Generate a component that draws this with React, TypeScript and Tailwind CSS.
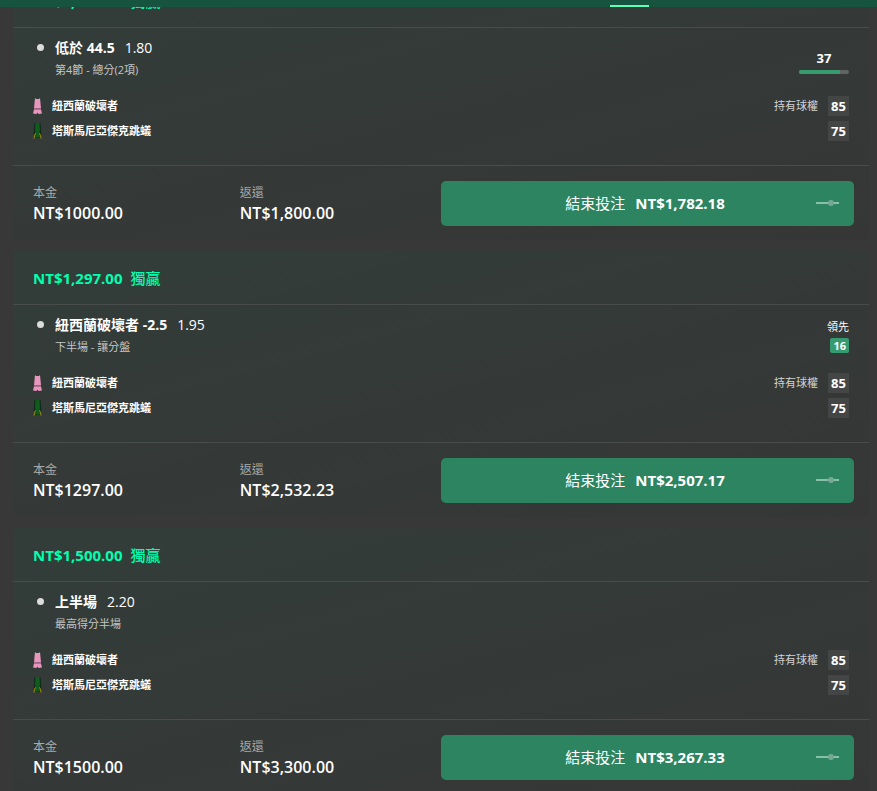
type Bet = {
  amount: string;
  pick: string;
  odds: string;
  market: string;
  stake: string;
  returns: string;
  cashOut: string;
  total?: number;
  lead?: number;
};

const bets: Bet[] = [
  {
    amount: "NT$1,000.00",
    pick: "低於 44.5",
    odds: "1.80",
    market: "第4節 - 總分(2項)",
    stake: "NT$1000.00",
    returns: "NT$1,800.00",
    cashOut: "NT$1,782.18",
    total: 37,
  },
  {
    amount: "NT$1,297.00",
    pick: "紐西蘭破壞者 -2.5",
    odds: "1.95",
    market: "下半場 - 讓分盤",
    stake: "NT$1297.00",
    returns: "NT$2,532.23",
    cashOut: "NT$2,507.17",
    lead: 16,
  },
  {
    amount: "NT$1,500.00",
    pick: "上半場",
    odds: "2.20",
    market: "最高得分半場",
    stake: "NT$1500.00",
    returns: "NT$3,300.00",
    cashOut: "NT$3,267.33",
  },
];

export default function App() {
  return (
    <div className="h-screen overflow-hidden bg-[#383838] text-white font-['Open_Sans','Noto_Sans_CJK_TC',sans-serif]">
      <header className="sticky top-0 z-10 flex h-[7px] items-end bg-[#17543f]">
        <span className="ml-[610px] h-[2px] w-[39px] bg-[#5dffb8]" />
      </header>
      <main className="-mt-[34px] flex flex-col gap-[10px] pl-[13px] pr-2">
        {bets.map((bet) => (
          <BetCard key={bet.amount} bet={bet} />
        ))}
      </main>
    </div>
  );
}

function BetCard({ bet }: { bet: Bet }) {
  return (
    <article className="rounded bg-[linear-gradient(165deg,#323d39,#363636)]">
      <h2 className="flex h-[55px] items-center gap-2 border-b border-[#484c4a] px-5 pt-[2px] text-[15px] font-bold text-[#00ffb0]">
        <span>{bet.amount}</span>
        <span className="font-medium">獨贏</span>
      </h2>

      <div className="border-b border-[#484c4a] px-5 pb-6 pt-[10px]">
        <div className="flex h-[58px] items-start justify-between">
          <div className="flex">
            <span className="ml-1 mt-[6px] h-[7px] w-[7px] rounded-full bg-[#dcdcdc]" />
            <div className="ml-[11px]">
              <p className="flex gap-[10px] text-sm leading-5">
                <span className="font-bold">{bet.pick}</span>
                <span>{bet.odds}</span>
              </p>
              <p className="mt-1 text-[11px] leading-4 text-[#c4c6c5]">{bet.market}</p>
            </div>
          </div>
          <BetStatus bet={bet} />
        </div>
        <div className="flex flex-col gap-[5px]">
          <TeamRow name="紐西蘭破壞者" score={85} icon={<PinkJersey />} possession />
          <TeamRow name="塔斯馬尼亞傑克跳蟻" score={75} icon={<GreenJersey />} />
        </div>
      </div>

      <div className="flex items-center justify-between px-[15px] pb-[14px] pt-[15px]">
        <Money label="本金" value={bet.stake} />
        <Money label="返還" value={bet.returns} />
        <button className="flex h-[45px] w-1/2 items-center rounded-[5px] bg-[#2d8461] px-[15px] text-[15px]">
          <span className="w-[18px]" />
          <span className="flex flex-1 justify-center gap-[10px]">
            <span>結束投注</span>
            <span className="font-bold">{bet.cashOut}</span>
          </span>
          <SliderIcon />
        </button>
      </div>
    </article>
  );
}

function BetStatus({ bet }: { bet: Bet }) {
  if (bet.total) {
    return (
      <div className="mt-[10px] flex w-[50px] flex-col items-center">
        <span className="text-[13px] font-bold leading-5">{bet.total}</span>
        <span className="mt-[2px] h-1 w-full overflow-hidden rounded-sm bg-[#626463]">
          <span
            className="block h-full bg-[#379b70]"
            style={{ width: `${(bet.total / 45) * 100}%` }}
          />
        </span>
      </div>
    );
  }
  if (bet.lead) {
    return (
      <div className="mt-1 flex flex-col items-end text-[11px] leading-4">
        <span>領先</span>
        <span className="mt-[3px] rounded-[2px] bg-[#379b70] px-[3px] font-bold leading-[15px]">
          {bet.lead}
        </span>
      </div>
    );
  }
  return null;
}

function TeamRow({
  name,
  score,
  icon,
  possession,
}: {
  name: string;
  score: number;
  icon: React.ReactNode;
  possession?: boolean;
}) {
  return (
    <div className="flex h-5 items-center text-[11px] leading-5">
      {icon}
      <span className="ml-[10px] font-bold">{name}</span>
      {possession && <span className="ml-auto mr-[10px] text-[#d2d4d3]">持有球權</span>}
      <span
        className={`${possession ? "" : "ml-auto"} w-[21px] bg-[#444645] text-center text-[13px] font-bold leading-5`}
      >
        {score}
      </span>
    </div>
  );
}

function Money({ label, value }: { label: string; value: string }) {
  return (
    <div className="first:pr-[5px] pl-[5px]">
      <p className="text-xs leading-[18px] text-[#a9abaa]">{label}</p>
      <p className="text-base font-semibold leading-[22px]">{value}</p>
    </div>
  );
}

function PinkJersey() {
  return (
    <svg className="h-4 w-[9px]" viewBox="0 0 9 16">
      <path d="M2 0l1 1h3l1-1 .5 5L8 10.5H1L1.5 5z" fill="#e796be" />
      <path d="M1 10.5h7v1H1z" fill="#a8648a" />
      <path d="M1 11.5h7l1 4-3.500.5-1-1.500-1 1.500L0 15.500z" fill="#e796be" />
    </svg>
  );
}

function GreenJersey() {
  return (
    <svg className="h-4 w-[9px]" viewBox="0 0 9 16">
      <path d="M1.500 0h6l.5 5 .5 10H.5L1 5z" fill="#10291b" />
      <path d="M2.500 0h4l.5 6-.5 5h-4L2 6z" fill="#0f5c1b" />
      <path d="M2 10h5v4.500H2z" fill="#0f5c1b" />
      <path d="M2.500 10.500Q1 12 1 15.500M6.500 10.500Q8 12 8 15.500" stroke="#b59b12" fill="none" />
    </svg>
  );
}

function SliderIcon() {
  return (
    <svg className="h-2 w-[23px]" viewBox="0 0 23 8">
      <path d="M0 2h23v2H0z" fill="#8abfa9" />
      <circle cx="15" cy="3" r="3" fill="#76a797" />
    </svg>
  );
}
